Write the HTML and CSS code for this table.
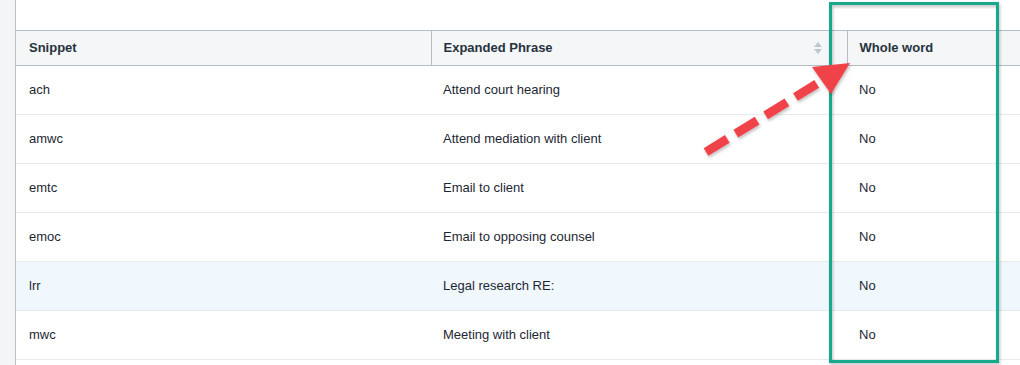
FILE: index.html
```html
<!DOCTYPE html>
<html lang="en">

<head>
  <meta charset="UTF-8">
  <meta name="viewport" content="width=device-width, initial-scale=1.0">
  <title>Text Snippets</title>
  <link rel="stylesheet" href="styles.css">
</head>

<body>
  <div class="sidebar"></div>

  <div class="main">
    <div class="toolbar"></div>

    <table class="snippets">
      <thead>
        <tr>
          <th class="col-snippet">Snippet</th>
          <th class="col-phrase sortable">Expanded Phrase
            <svg class="sort-icon" width="8" height="12" viewBox="0 0 8 12">
              <path d="M4 0 L8 5 L0 5 Z" />
              <path d="M0 7 L8 7 L4 12 Z" />
            </svg>
          </th>
          <th class="col-whole">Whole word</th>
        </tr>
      </thead>
      <tbody>
        <tr><td>ach</td><td>Attend court hearing</td><td>No</td></tr>
        <tr><td>amwc</td><td>Attend mediation with client</td><td>No</td></tr>
        <tr><td>emtc</td><td>Email to client</td><td>No</td></tr>
        <tr><td>emoc</td><td>Email to opposing counsel</td><td>No</td></tr>
        <tr class="hover"><td>lrr</td><td>Legal research RE:</td><td>No</td></tr>
        <tr><td>mwc</td><td>Meeting with client</td><td>No</td></tr>
      </tbody>
    </table>
  </div>

  <!-- callout drawn over the table -->
  <svg class="callout" width="1020" height="365" viewBox="0 0 1020 365">
    <defs>
      <filter id="soft" x="-10%" y="-10%" width="120%" height="120%">
        <feDropShadow dx="1" dy="2" stdDeviation="1.5" flood-color="#000" flood-opacity="0.25" />
      </filter>
    </defs>
    <rect x="830.5" y="3.5" width="167" height="358" fill="none" stroke="#17a98b" stroke-width="3" filter="url(#soft)" />
    <g filter="url(#soft)">
      <line x1="706" y1="152" x2="823" y2="80" stroke="#f0434a" stroke-width="9" stroke-dasharray="25 10" />
      <polygon points="850,63 812,67 831,94" fill="#f0434a" />
    </g>
  </svg>
</body>

</html>
```

FILE: styles.css
```css
body {
  font-family: "Liberation Sans", Arial, sans-serif;
  font-size: 13px;
  margin: 0;
  display: flex;
  height: 100vh;
  overflow: hidden;
  color: #1d2733;
}

.sidebar {
  width: 15px;
  flex: none;
  background-color: #f3f5f7;
  border-right: 1px solid #b7c2ca;
}

.main {
  flex: 1;
  background-color: #fff;
  overflow: hidden;
}

.toolbar {
  height: 30px;
}

.snippets {
  border-collapse: collapse;
  width: 1100px;
  table-layout: fixed;
}

.snippets th {
  background-color: #f4f6f8;
  border-top: 1px solid #b3bec6;
  border-bottom: 1px solid #b3bec6;
  height: 33px;
  padding: 0 13px 1px;
  text-align: left;
  font-weight: bold;
  color: #27323d;
}

.snippets th + th {
  border-left: 1px solid #b3bec6;
  padding-left: 12px;
}

.col-snippet,
.col-phrase {
  box-sizing: border-box;
}

.col-snippet {
  width: 415px;
}

.col-phrase {
  width: 416px;
}

.sortable {
  position: relative;
}

.sort-icon {
  position: absolute;
  right: 25px;
  top: 11px;
  fill: #bcc6cd;
}

.snippets td {
  height: 47px;
  padding: 0 13px 1px;
  border-bottom: 1px solid #e6eaed;
}

.snippets td:nth-child(2),
.snippets td:nth-child(3) {
  padding-left: 12px;
}

.snippets tr.hover td {
  background-color: #f0f7fd;
}

.callout {
  position: absolute;
  left: 0;
  top: 0;
  pointer-events: none;
}
```
